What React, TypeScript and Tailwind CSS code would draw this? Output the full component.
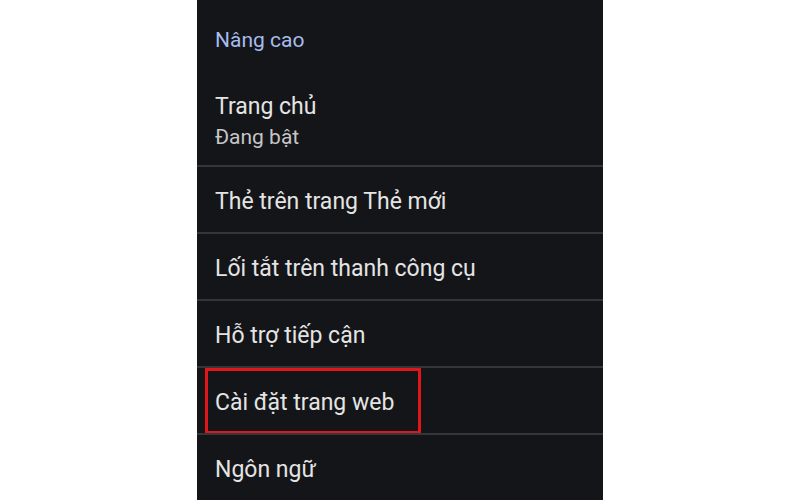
export default function App() {
  const rows = [
    "Thẻ trên trang Thẻ mới",
    "Lối tắt trên thanh công cụ",
    "Hỗ trợ tiếp cận",
    "Cài đặt trang web",
    "Ngôn ngữ",
  ]

  return (
    <div className="w-[800px] h-[500px] bg-white flex justify-center overflow-hidden" style={{ fontFamily: "Roboto, 'Noto Sans', sans-serif" }}>
      <div className="w-[406px] h-full bg-[#141519] flex flex-col">
        <div className="h-[76px] pt-[26px] pl-[18px] text-[21px] leading-[28px] text-[#a7bcec]">
          Nâng cao
        </div>
        <div className="h-[91px] pt-[17px] pl-[18px] flex flex-col">
          <span className="text-[23px] leading-[30px] text-[#e4e4e4]">Trang chủ</span>
          <span className="text-[21px] leading-[30px] text-[#c6c6c6]">Đang bật</span>
        </div>
        {rows.map((label) => (
          <div key={label} className="relative shrink-0 h-[67px] border-t-2 border-[#35363a] pl-[18px] pt-[5px] flex items-center">
            <span className="text-[23px] leading-[30px] text-[#e4e4e4]">{label}</span>
            {label === "Cài đặt trang web" && (
              <span className="absolute left-[8px] top-0 w-[216px] h-[66px] border-[3px] border-[#e0161b]" />
            )}
          </div>
        ))}
      </div>
    </div>
  )
}
